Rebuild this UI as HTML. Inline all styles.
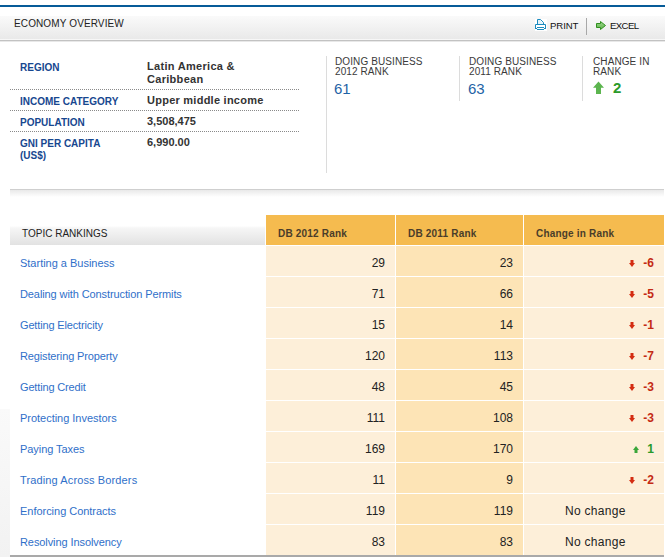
<!DOCTYPE html>
<html><head><meta charset="utf-8">
<style>
*{margin:0;padding:0;box-sizing:border-box}
html,body{width:665px;height:557px;overflow:hidden;background:#fff}
body{position:relative;font-family:"Liberation Sans",sans-serif;color:#333}
.a{position:absolute;white-space:nowrap}
#leftbg{position:absolute;left:0;top:409px;width:10px;height:148px;background:linear-gradient(#fafafa,#f2f2f2)}
#blue{position:absolute;left:0;top:5px;width:665px;height:2px;background:#065b98}
#hdr{position:absolute;left:0;top:16px;width:665px;height:23px;background:linear-gradient(#fafafa,#e9e9e9)}
#hdrw{position:absolute;left:0;top:39px;width:665px;height:1px;background:#f7f7f7}
#hdrline{position:absolute;left:0;top:40px;width:665px;height:1px;background:#c2c2c2}
#hdrline2{position:absolute;left:0;top:41px;width:665px;height:1px;background:#e8e8e8}
.ht{font-size:10px;color:#222;line-height:12px}
.dot{position:absolute;left:10px;width:290px;height:1px;background:repeating-linear-gradient(90deg,#8a8a8a 0 1px,transparent 1px 2px)}
.lbl{font-size:10px;font-weight:bold;color:#17478f;line-height:12px}
.val{font-size:11px;font-weight:bold;color:#333;line-height:13px}
.vl{position:absolute;width:1px;background:#dcdcdc}
.rh{font-size:10px;color:#3a3a3a;line-height:10px;letter-spacing:0.1px}
.rn{font-size:15px;color:#1f63a6;line-height:17px}
#sep{position:absolute;left:10px;top:189px;width:654px;height:1px;background:#cfcfcf}
#sepsh{position:absolute;left:10px;top:190px;width:654px;height:7px;background:linear-gradient(#e9e9e9,#fff)}
#th0{position:absolute;left:10px;top:215px;width:255px;height:30px;background:linear-gradient(#fff 0px,#fff 11px,#f6f6f6 13px,#e2e2e2 30px)}
#th0line{display:none}
.th{position:absolute;top:215px;height:30px;background:#f5bb4f}
.thx{font-size:10px;font-weight:bold;color:#4a3d2a;line-height:12px;letter-spacing:0.2px;top:228px}
.c1{position:absolute;left:266px;width:129px;height:30px;background:#fdefd9}
.c2{position:absolute;left:396px;width:127px;height:30px;background:#fde4b6}
.c3{position:absolute;left:524px;width:140px;height:30px;background:#fdefd9}
.lk{font-size:11px;color:#2f6fc9;line-height:13px}
.num{font-size:12px;color:#222;text-align:right;line-height:14px}
.chg{color:#c42a14;font-weight:bold}
.nc{font-size:12px;color:#222;line-height:14px;letter-spacing:0.3px}
.chgu{color:#2a9a2a;font-weight:bold}
#bot{position:absolute;left:10px;top:555px;width:654px;height:2px;background:#a9a9a9}
</style></head><body>
<div id="leftbg"></div>
<div id="blue"></div>
<div id="hdr"></div>
<div id="hdrw"></div><div id="hdrline"></div>
<div id="hdrline2"></div>
<div class="a ht" style="left:14px;top:18px;letter-spacing:0.12px">ECONOMY OVERVIEW</div>

<div class="a" style="left:535px;top:19px;width:12px;height:12px;background:#fff"></div>
<svg class="a" style="left:535px;top:19px" width="12" height="12" viewBox="0 0 12 12">
 <path d="M2.5 5V0.5H5.5L8.5 3.5V5" fill="#e4f2f9" stroke="#1a8bbf" stroke-width="1"/>
 <path d="M0.5 9.5V5.5H10.5V9.5M0 9.5H2M9 9.5H11M2 8.5H9M2 10.5H9" fill="none" stroke="#1a8bbf" stroke-width="1"/>
 <rect x="6" y="2" width="1" height="1" fill="#fff"/>
</svg>
<div class="a ht" style="left:550px;top:20px;font-size:9.6px;letter-spacing:-0.1px;color:#111">PRINT</div>
<div class="a" style="left:586px;top:18px;width:1px;height:17px;background:#a8a8a8"></div>
<svg class="a" style="left:596px;top:21px" width="11" height="9" viewBox="0 0 11 9">
 <defs><linearGradient id="g1" x1="0" y1="0" x2="0" y2="1"><stop offset="0" stop-color="#9ed88f"/><stop offset="1" stop-color="#5fb24a"/></linearGradient></defs>
 <path d="M0.5 2.5H4.5V0.5L9.5 4.5L4.5 8.5V6.5H0.5Z" fill="url(#g1)" stroke="#2f8f1f" stroke-width="1"/>
</svg>
<div class="a ht" style="left:610px;top:20px;font-size:9.6px;letter-spacing:-0.6px;color:#111">EXCEL</div>

<div class="a lbl" style="left:20px;top:62px">REGION</div>
<div class="a val" style="left:147px;top:60px;letter-spacing:0.3px">Latin America &amp;<br>Caribbean</div>
<div class="dot" style="top:89px"></div>
<div class="a lbl" style="left:20px;top:96px">INCOME CATEGORY</div>
<div class="a val" style="left:147px;top:94px;letter-spacing:0.25px">Upper middle income</div>
<div class="dot" style="top:110px"></div>
<div class="a lbl" style="left:20px;top:117px">POPULATION</div>
<div class="a val" style="left:147px;top:115px">3,508,475</div>
<div class="dot" style="top:131px"></div>
<div class="a lbl" style="left:20px;top:138px">GNI PER CAPITA<br>(US$)</div>
<div class="a val" style="left:147px;top:136px">6,990.00</div>

<div class="vl" style="left:326px;top:56px;height:117px"></div>
<div class="a rh" style="left:335px;top:57px">DOING BUSINESS<br>2012 RANK</div>
<div class="a rn" style="left:334px;top:80px">61</div>
<div class="vl" style="left:459px;top:56px;height:45px"></div>
<div class="a rh" style="left:469px;top:57px">DOING BUSINESS<br>2011 RANK</div>
<div class="a rn" style="left:468px;top:80px">63</div>
<div class="vl" style="left:582px;top:56px;height:45px"></div>
<div class="a rh" style="left:593px;top:57px">CHANGE IN<br>RANK</div>
<svg class="a" style="left:593px;top:81px" width="11" height="13" viewBox="0 0 11 13">
 <path d="M5.5 0.5L11 6.8H8V13H3V6.8H0Z" fill="#5cb54f"/>
</svg>
<div class="a" style="left:613px;top:79px;font-size:15px;font-weight:bold;color:#2b9a2b;line-height:17px">2</div>

<div id="sep"></div>
<div id="sepsh"></div>

<div id="th0"></div>
<div id="th0line"></div>
<div class="a ht" style="left:22px;top:228px">TOPIC RANKINGS</div>
<div class="th" style="left:266px;width:129px"></div>
<div class="th" style="left:396px;width:127px"></div>
<div class="th" style="left:524px;width:140px"></div>
<div class="a thx" style="left:278px">DB 2012 Rank</div>
<div class="a thx" style="left:408px">DB 2011 Rank</div>
<div class="a thx" style="left:536px">Change in Rank</div>

<div class="c1" style="top:246px"></div><div class="c2" style="top:246px"></div><div class="c3" style="top:246px"></div>
<div class="a lk" style="left:20px;top:257px;letter-spacing:-0.011px">Starting a Business</div>
<div class="a num" style="left:266px;width:119px;top:256px">29</div>
<div class="a num" style="left:396px;width:117px;top:256px">23</div>
<div class="a num chg" style="left:524px;width:130px;top:256px">-6</div>
<svg class="a" style="left:629px;top:260px" width="6" height="7" viewBox="0 0 6 7"><path d="M1.5 0H4.5V3H6L3 7L0 3H1.5Z" fill="#d42c12"/></svg>
<div class="c1" style="top:277px"></div><div class="c2" style="top:277px"></div><div class="c3" style="top:277px"></div>
<div class="a lk" style="left:20px;top:288px;letter-spacing:-0.100px">Dealing with Construction Permits</div>
<div class="a num" style="left:266px;width:119px;top:287px">71</div>
<div class="a num" style="left:396px;width:117px;top:287px">66</div>
<div class="a num chg" style="left:524px;width:130px;top:287px">-5</div>
<svg class="a" style="left:629px;top:291px" width="6" height="7" viewBox="0 0 6 7"><path d="M1.5 0H4.5V3H6L3 7L0 3H1.5Z" fill="#d42c12"/></svg>
<div class="c1" style="top:308px"></div><div class="c2" style="top:308px"></div><div class="c3" style="top:308px"></div>
<div class="a lk" style="left:20px;top:319px;letter-spacing:-0.150px">Getting Electricity</div>
<div class="a num" style="left:266px;width:119px;top:318px">15</div>
<div class="a num" style="left:396px;width:117px;top:318px">14</div>
<div class="a num chg" style="left:524px;width:130px;top:318px">-1</div>
<svg class="a" style="left:629px;top:322px" width="6" height="7" viewBox="0 0 6 7"><path d="M1.5 0H4.5V3H6L3 7L0 3H1.5Z" fill="#d42c12"/></svg>
<div class="c1" style="top:339px"></div><div class="c2" style="top:339px"></div><div class="c3" style="top:339px"></div>
<div class="a lk" style="left:20px;top:350px;letter-spacing:-0.137px">Registering Property</div>
<div class="a num" style="left:266px;width:119px;top:349px">120</div>
<div class="a num" style="left:396px;width:117px;top:349px">113</div>
<div class="a num chg" style="left:524px;width:130px;top:349px">-7</div>
<svg class="a" style="left:629px;top:353px" width="6" height="7" viewBox="0 0 6 7"><path d="M1.5 0H4.5V3H6L3 7L0 3H1.5Z" fill="#d42c12"/></svg>
<div class="c1" style="top:370px"></div><div class="c2" style="top:370px"></div><div class="c3" style="top:370px"></div>
<div class="a lk" style="left:20px;top:381px;letter-spacing:-0.154px">Getting Credit</div>
<div class="a num" style="left:266px;width:119px;top:380px">48</div>
<div class="a num" style="left:396px;width:117px;top:380px">45</div>
<div class="a num chg" style="left:524px;width:130px;top:380px">-3</div>
<svg class="a" style="left:629px;top:384px" width="6" height="7" viewBox="0 0 6 7"><path d="M1.5 0H4.5V3H6L3 7L0 3H1.5Z" fill="#d42c12"/></svg>
<div class="c1" style="top:401px"></div><div class="c2" style="top:401px"></div><div class="c3" style="top:401px"></div>
<div class="a lk" style="left:20px;top:412px;letter-spacing:-0.026px">Protecting Investors</div>
<div class="a num" style="left:266px;width:119px;top:411px">111</div>
<div class="a num" style="left:396px;width:117px;top:411px">108</div>
<div class="a num chg" style="left:524px;width:130px;top:411px">-3</div>
<svg class="a" style="left:629px;top:415px" width="6" height="7" viewBox="0 0 6 7"><path d="M1.5 0H4.5V3H6L3 7L0 3H1.5Z" fill="#d42c12"/></svg>
<div class="c1" style="top:432px"></div><div class="c2" style="top:432px"></div><div class="c3" style="top:432px"></div>
<div class="a lk" style="left:20px;top:443px;letter-spacing:-0.055px">Paying Taxes</div>
<div class="a num" style="left:266px;width:119px;top:442px">169</div>
<div class="a num" style="left:396px;width:117px;top:442px">170</div>
<div class="a num chgu" style="left:524px;width:130px;top:442px">1</div>
<svg class="a" style="left:633px;top:446px" width="6" height="7" viewBox="0 0 6 7"><path d="M3 0L6 4H4.5V7H1.5V4H0Z" fill="#3aa63a"/></svg>
<div class="c1" style="top:463px"></div><div class="c2" style="top:463px"></div><div class="c3" style="top:463px"></div>
<div class="a lk" style="left:20px;top:474px;letter-spacing:0.124px">Trading Across Borders</div>
<div class="a num" style="left:266px;width:119px;top:473px">11</div>
<div class="a num" style="left:396px;width:117px;top:473px">9</div>
<div class="a num chg" style="left:524px;width:130px;top:473px">-2</div>
<svg class="a" style="left:629px;top:477px" width="6" height="7" viewBox="0 0 6 7"><path d="M1.5 0H4.5V3H6L3 7L0 3H1.5Z" fill="#d42c12"/></svg>
<div class="c1" style="top:494px"></div><div class="c2" style="top:494px"></div><div class="c3" style="top:494px"></div>
<div class="a lk" style="left:20px;top:505px;letter-spacing:-0.028px">Enforcing Contracts</div>
<div class="a num" style="left:266px;width:119px;top:504px">119</div>
<div class="a num" style="left:396px;width:117px;top:504px">119</div>
<div class="a nc" style="left:565px;top:504px">No change</div>
<div class="c1" style="top:525px"></div><div class="c2" style="top:525px"></div><div class="c3" style="top:525px"></div>
<div class="a lk" style="left:20px;top:536px;letter-spacing:-0.084px">Resolving Insolvency</div>
<div class="a num" style="left:266px;width:119px;top:535px">83</div>
<div class="a num" style="left:396px;width:117px;top:535px">83</div>
<div class="a nc" style="left:565px;top:535px">No change</div>
<div id="bot"></div>
</body></html>
